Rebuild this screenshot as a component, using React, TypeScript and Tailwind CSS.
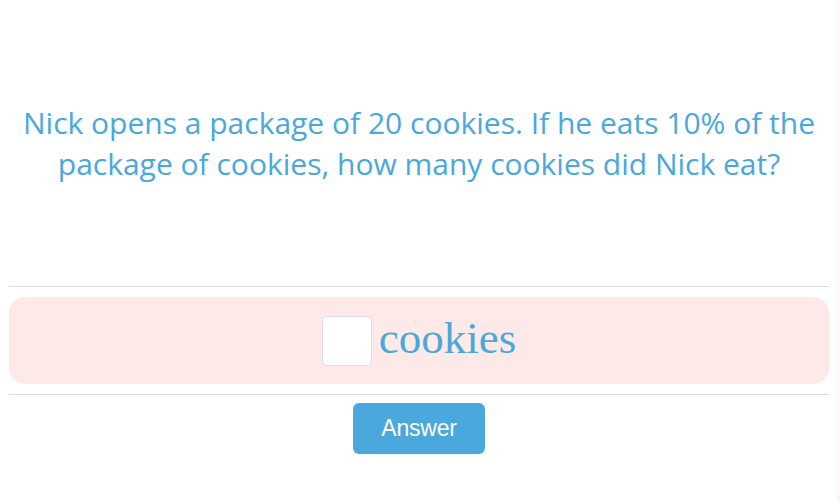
export default function App() {
  return (
    <div className="w-[840px] h-[501px] bg-white">
      <div className="w-[839px] h-full border-r border-dotted border-[#f6dde2] px-[9px]">
        {/* Question */}
        <div className="h-[286px] flex items-center justify-center">
          <p
            className="text-center text-[#4aa8dc] text-[30px] leading-[41px]"
            style={{ fontFamily: '"Open Sans", "Noto Sans", sans-serif' }}
          >
            Nick opens a package of 20 cookies. If he eats 10% of the
            <br />
            package of cookies, how many cookies did Nick eat?
          </p>
        </div>

        <div className="border-t border-[#dedde8]" />

        {/* Answer field */}
        <div className="mt-[10px] h-[87px] rounded-[16px] bg-[#fdeae8] flex items-center justify-center gap-[7px]">
          <input
            type="text"
            aria-label="answer"
            className="w-[50px] h-[50px] rounded-[5px] border border-[#dcdbe8] bg-white outline-none"
          />
          <span
            className="text-[#4aa8dc] text-[45px] leading-none pb-[4px]"
            style={{ fontFamily: '"Liberation Serif", serif' }}
          >
            cookies
          </span>
        </div>

        <div className="mt-[10px] border-t border-[#dedde8]" />

        <div className="flex justify-center mt-[8px]">
          <button
            className="w-[132px] h-[51px] rounded-[6px] bg-[#4aa8dc] text-white text-[23px] tracking-[-0.2px]"
            style={{ fontFamily: '"Liberation Sans", Arial, sans-serif' }}
          >
            Answer
          </button>
        </div>
      </div>
    </div>
  );
}
